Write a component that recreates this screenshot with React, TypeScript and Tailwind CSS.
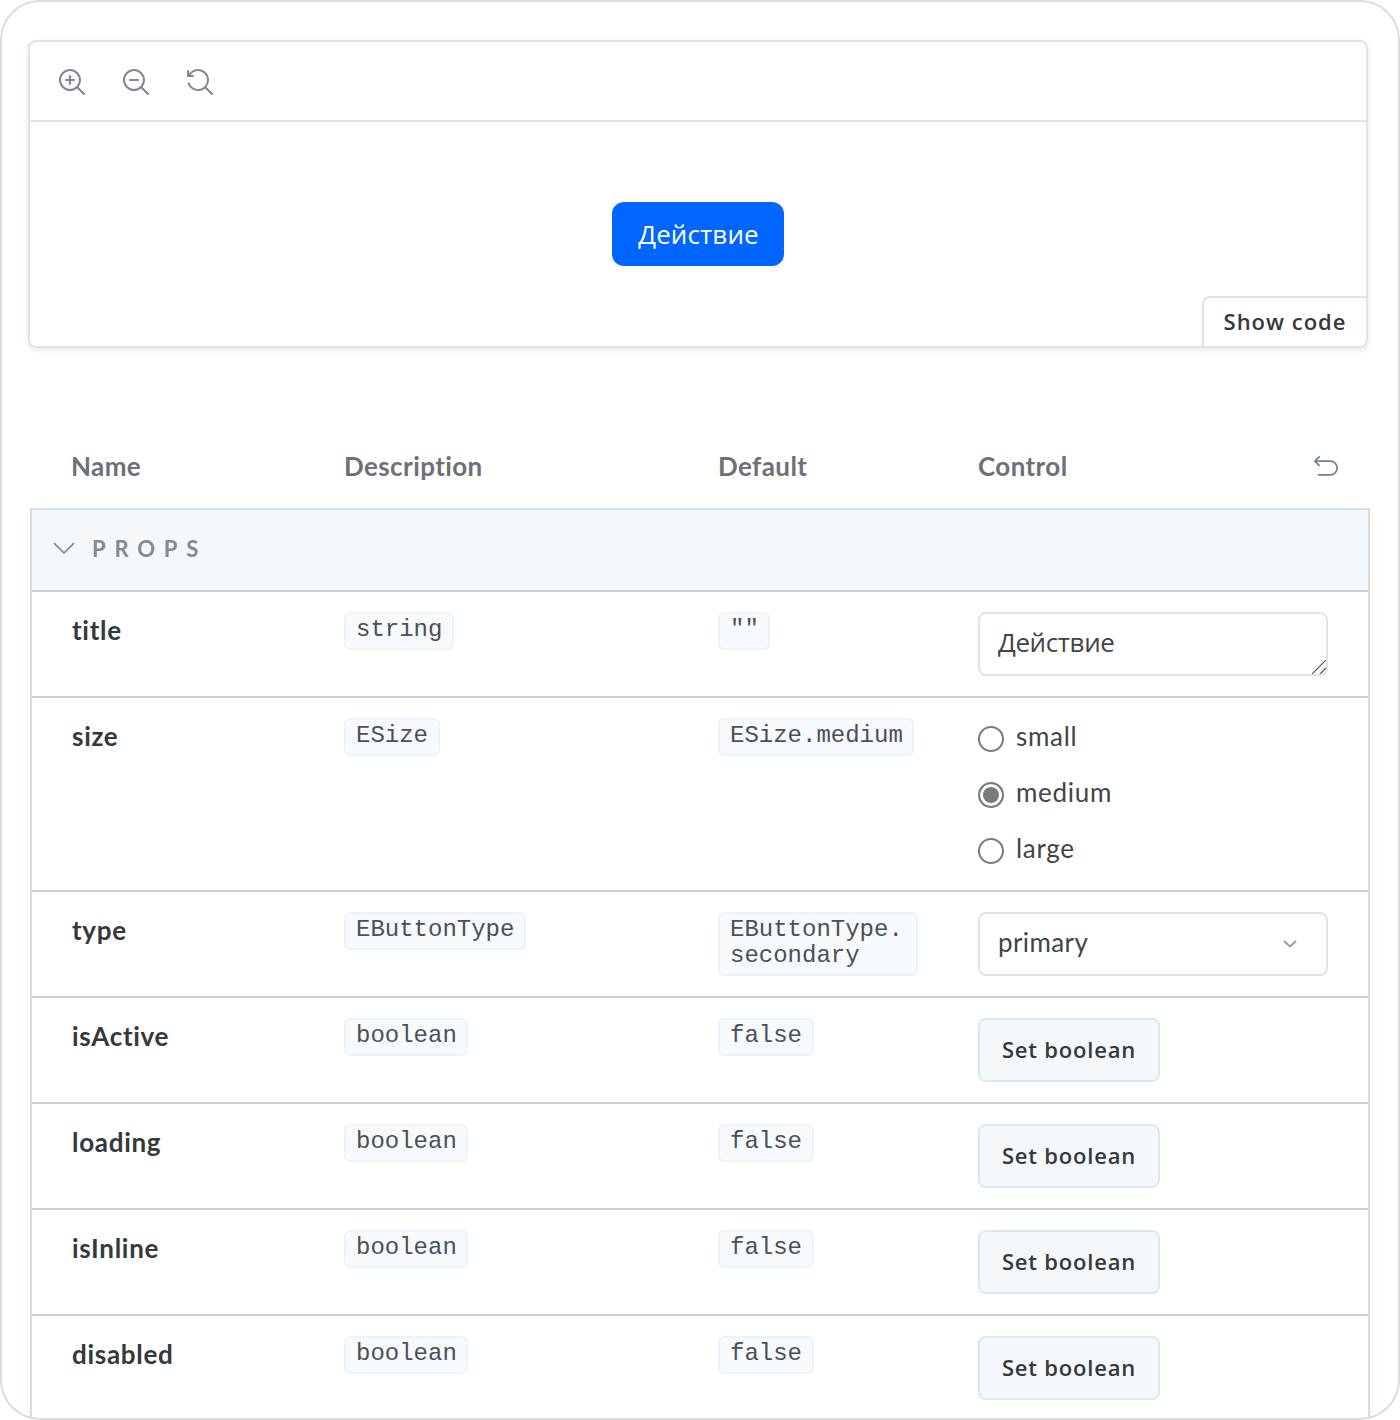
import React, { useState } from 'react';

type Control = 'text' | 'radio' | 'select' | 'boolean';

interface Arg {
  name: string;
  type: string;
  defaultValue: string;
  control: Control;
}

const args: Arg[] = [
  { name: 'title', type: 'string', defaultValue: '""', control: 'text' },
  { name: 'size', type: 'ESize', defaultValue: 'ESize.medium', control: 'radio' },
  { name: 'type', type: 'EButtonType', defaultValue: 'EButtonType.secondary', control: 'select' },
  { name: 'isActive', type: 'boolean', defaultValue: 'false', control: 'boolean' },
  { name: 'loading', type: 'boolean', defaultValue: 'false', control: 'boolean' },
  { name: 'isInline', type: 'boolean', defaultValue: 'false', control: 'boolean' },
  { name: 'disabled', type: 'boolean', defaultValue: 'false', control: 'boolean' },
];

const sizes = ['small', 'medium', 'large'];

const LENS =
  'M9.544 10.206a5.5 5.5 0 11.662-.662.5.5 0 01.148.102l3 3a.5.5 0 01-.708.708l-3-3a.5.5 0 01-.102-.148zM10.5 6a4.5 4.5 0 11-9 0 4.5 4.5 0 019 0z';

const Icon: React.FC<{ className: string; paths: string[] }> = ({ className, paths }) => (
  <svg viewBox="0 0 14 14" fill="currentColor" fillRule="evenodd" className={className}>
    {paths.map((d) => (
      <path key={d} d={d} />
    ))}
  </svg>
);

const Toolbar: React.FC = () => (
  <div className="flex h-20 items-center gap-9 border-b-2 border-[#dfe4e8] px-7 pt-px text-[#7c8894]">
    <button aria-label="Zoom in">
      <Icon
        className="size-7"
        paths={[
          'M6 3.5a.5.5 0 01.5.5v1.5H8a.5.5 0 010 1H6.5V8a.5.5 0 01-1 0V6.5H4a.5.5 0 010-1h1.5V4a.5.5 0 01.5-.5z',
          LENS,
        ]}
      />
    </button>
    <button aria-label="Zoom out">
      <Icon className="size-7" paths={['M4 5.5a.5.5 0 000 1h4a.5.5 0 000-1H4z', LENS]} />
    </button>
    <button aria-label="Reset zoom">
      <Icon
        className="size-7"
        paths={[
          'M1.5 2.837V1.5a.5.5 0 00-1 0V4a.5.5 0 00.5.5h2.5a.5.5 0 000-1H2.258a4.5 4.5 0 11-.496 4.016.5.5 0 10-.942.337 5.502 5.502 0 008.724 2.353.5.5 0 00.102.148l3 3a.5.5 0 00.708-.708l-3-3a.5.5 0 00-.148-.102A5.5 5.5 0 101.5 2.837z',
        ]}
      />
    </button>
  </div>
);

const Preview: React.FC = () => (
  <section className="ml-[26px] h-[308px] w-[1340px] rounded-lg border-2 border-[#dfe4e8] shadow-[0_2px_6px_rgba(0,0,0,0.1)]">
    <Toolbar />
    <div className="flex h-56 flex-col">
      <div className="flex justify-center pt-20">
        <button className="h-16 w-[172px] rounded-xl bg-[#0066ff] pl-px font-['Open_Sans',sans-serif] text-[26px] tracking-[0.1px] text-white">
          Действие
        </button>
      </div>
      <button className="mt-auto h-[50px] w-[164px] self-end rounded-tl-lg rounded-br-md border-t-2 border-l-2 border-[#dfe4e8] pb-0.5 font-['Open_Sans',sans-serif] text-[22px] font-semibold tracking-[1px]">
        Show code
      </button>
    </div>
  </section>
);

const Code: React.FC<{ children: string }> = ({ children }) => {
  const [first, second] = children.split('.');
  // Long enum members wrap after the dot
  const isLong = children.length > 14;

  return (
    <code
      className={`block w-fit rounded-md border-2 border-[#ecf4f9] bg-[#f7fafc] pt-[3px] pb-[5px] pl-2.5 font-['Liberation_Mono',monospace] text-[24px] leading-[26px] text-[#4a5054] ${isLong ? 'pr-[13px]' : 'pr-[9.5px]'}`}
    >
      {isLong ? (
        <>
          {first}.<br />
          {second}
        </>
      ) : (
        children
      )}
    </code>
  );
};

const ControlCell: React.FC<{ control: Control }> = ({ control }) => {
  const [value, setValue] = useState('medium');

  if (control === 'text') {
    return (
      <div className="relative w-[350px]">
        <textarea
          defaultValue="Действие"
          rows={1}
          className="block h-16 w-full resize-none overflow-hidden rounded-lg border-2 border-[#dfe4e8] px-[18px] pt-[11px] font-['Open_Sans',sans-serif] text-[26px] leading-[34px] tracking-[-0.4px] text-[#3f454a]"
        />
        <svg viewBox="0 0 14 14" className="absolute right-0.5 bottom-0.5 size-3.5" stroke="#555" strokeWidth="1.2">
          <path d="M0 14L14 0M8 14l6-6" />
        </svg>
      </div>
    );
  }

  if (control === 'radio') {
    return (
      <div className="flex flex-col gap-4">
        {sizes.map((size) => (
          <label key={size} className="flex h-10 items-center gap-3 text-[26px] tracking-[0.7px] text-[#3f454a]">
            <input
              type="radio"
              name="size"
              className="mt-0.5 size-[26px] appearance-none rounded-full border-2 border-[#7b7b7b] checked:bg-[#777c80] checked:shadow-[inset_0_0_0_3px_white]"
              checked={value === size}
              onChange={() => setValue(size)}
            />
            <span className="-mt-1">{size}</span>
          </label>
        ))}
      </div>
    );
  }

  if (control === 'select') {
    return (
      <button className="flex h-16 w-[350px] items-center justify-between rounded-lg border-2 border-[#dfe4e8] pr-7 pl-[18px] text-[26px] tracking-[0.4px] text-[#3f454a]">
        <span className="-mt-1">primary</span>
        <svg viewBox="0 0 16 16" className="size-4" fill="none" stroke="#94a0a8" strokeWidth="2">
          <path d="M2 5l6 5.5L14 5" />
        </svg>
      </button>
    );
  }

  return (
    <button className="h-16 w-[182px] rounded-lg border-2 border-[#d9e8f2] bg-[#f5f8fb] pb-0.5 font-['Open_Sans',sans-serif] text-[22px] font-semibold tracking-[0.8px]">
      Set boolean
    </button>
  );
};

const ArgsTable: React.FC = () => (
  <section className="mt-[76px] ml-7 w-[1340px]">
    <div className="grid h-[84px] grid-cols-[273px_374px_260px_1fr] items-center pl-[41px] text-[26px] font-bold tracking-[0.4px] text-[#6b7177]">
      <span>Name</span>
      <span>Description</span>
      <span>Default</span>
      <span className="flex items-center justify-between pr-8">
        Control
        <button aria-label="Reset controls" className="pt-1 text-[#73828c]">
          <Icon
            className="size-6"
            paths={[
              'M3.354.146a.5.5 0 010 .708L1.707 2.5H9.5a4.5 4.5 0 010 9h-7a.5.5 0 010-1h7a3.5 3.5 0 100-7H1.707l1.647 1.646a.5.5 0 11-.708.708l-2.5-2.5a.5.5 0 010-.708l2.5-2.5a.5.5 0 01.708 0z',
            ]}
          />
        </button>
      </span>
    </div>
    <div className="border-2 border-b-0 border-[#d6dce0] shadow-[0_2px_10px_rgba(0,0,0,0.06)]">
      <button className="flex h-20 w-full items-center gap-4 bg-[#f4f8fb] pb-1 pl-5 text-[22px] font-bold tracking-[8.8px] text-[#848a90]">
        <Icon
          className="mb-0.5 size-6"
          paths={[
            'M1.146 4.646a.5.5 0 01.708 0L7 9.793l5.146-5.147a.5.5 0 01.708.708l-5.5 5.5a.5.5 0 01-.708 0l-5.5-5.5a.5.5 0 010-.708z',
          ]}
        />
        PROPS
      </button>
      {args.map((arg) => (
        <div
          key={arg.name}
          className="grid grid-cols-[272px_374px_260px_1fr] items-start border-t-2 border-[#cbd0d4] py-5 pl-10"
        >
          <span className="text-[26px] leading-9 font-bold tracking-[0.7px]">{arg.name}</span>
          <Code>{arg.type}</Code>
          <Code>{arg.defaultValue}</Code>
          <ControlCell control={arg.control} />
        </div>
      ))}
    </div>
  </section>
);

const App: React.FC = () => {
  return (
    <main className="h-[1420px] w-[1400px] overflow-hidden rounded-[40px] border-2 border-[#dcdcdc] bg-white pt-[38px] font-['Lato',sans-serif] text-[#33393d]">
      <Preview />
      <ArgsTable />
    </main>
  );
};

export default App;
